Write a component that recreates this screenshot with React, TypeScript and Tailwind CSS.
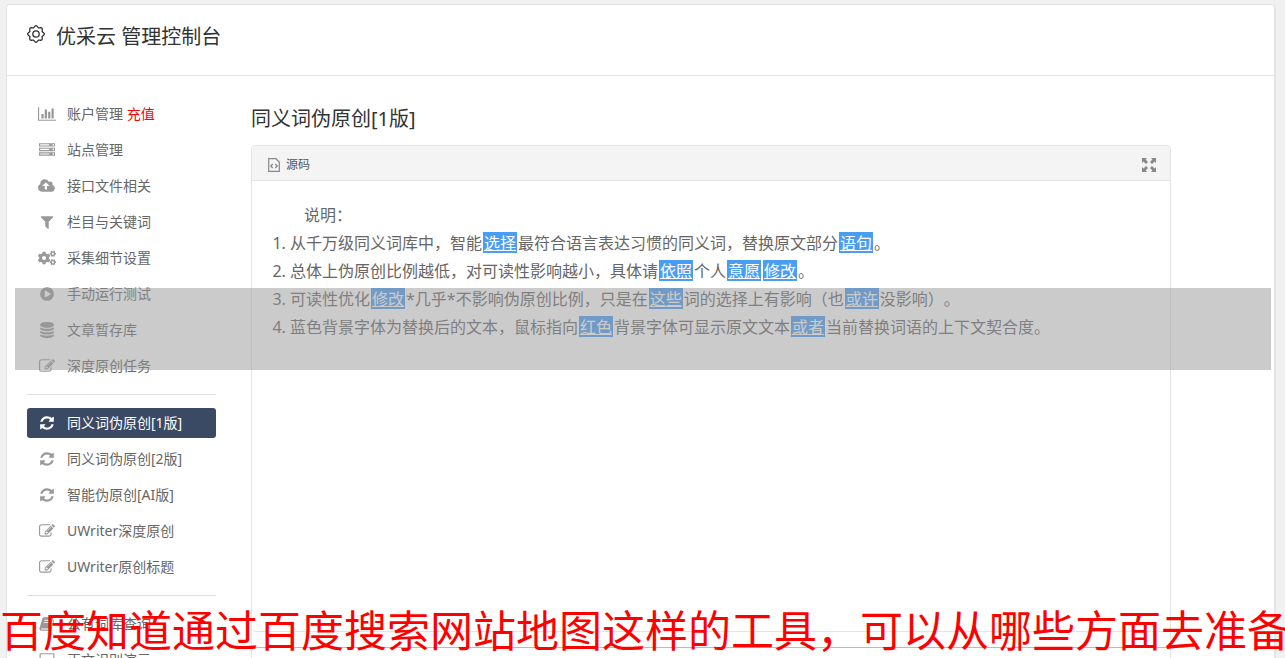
import React from 'react';
import { FaCogs } from 'react-icons/fa';

interface GlyphProps {
  d: string;
  wide?: boolean;
}

// all glyphs share a 1792 unit em, some are 2048 wide
const Glyph: React.FC<GlyphProps> = ({ d, wide = false }) => (
  <svg
    viewBox={wide ? '0 0 2048 1792' : '0 0 1792 1792'}
    className={wide ? 'w-[18px] h-4' : 'w-4 h-4'}
    fill="currentColor"
    aria-hidden="true"
  >
    <path d={d} />
  </svg>
);

const CHART =
  'M640 896v512h-256v-512h256zM1024 384v1024h-256v-1024h256zM2048 1536v128h-2048v-1536h128v1408h1920zM1408 640v768h-256v-768h256zM1792 256v1152h-256v-1152h256z';
const SERVER =
  'M128 1408h1024v-128h-1024v128zm0-512h1024v-128h-1024v128zm1568 448q0-40-28-68t-68-28-68 28-28 68 28 68 68 28 68-28 28-68zm-1568-960h1024v-128h-1024v128zm1568 448q0-40-28-68t-68-28-68 28-28 68 28 68 68 28 68-28 28-68zm0-512q0-40-28-68t-68-28-68 28-28 68 28 68 68 28 68-28 28-68zm96 832v384h-1792v-384h1792zm0-512v384h-1792v-384h1792zm0-512v384h-1792v-384h1792z';
const CLOUD =
  'M1280 864q0-14-9-23l-352-352q-9-9-23-9t-23 9l-351 351q-10 12-10 24 0 14 9 23t23 9h224v352q0 13 9.5 22.5t22.5 9.5h192q13 0 22.5-9.5t9.5-22.5v-352h224q13 0 22.5-9.5t9.5-22.5zm640 288q0 159-112.5 271.5t-271.5 112.5h-1088q-185 0-316.5-131.5t-131.5-316.5q0-130 70-240t188-165q-2-30-2-43 0-212 150-362t362-150q156 0 285.5 87t188.5 231q71-62 166-62 106 0 181 75t75 181q0 76-41 138 130 31 213.5 135.5t83.5 238.5z';
const FILTER =
  'M1595 295q17 41-14 70l-493 493v742q0 42-39 59-13 5-25 5-27 0-45-19l-256-256q-19-19-19-45v-486l-493-493q-31-29-14-70 17-39 59-39h1280q42 0 59 39z';
const PLAY =
  'M896 128q209 0 385.5 103t279.5 279.5 103 385.5-103 385.5-279.5 279.5-385.5 103-385.5-103-279.5-279.5-103-385.5 103-385.5 279.5-279.5 385.5-103zm384 823q32-18 32-55t-32-55l-544-320q-31-19-64-1-32 19-32 56v640q0 37 32 56 16 8 32 8 17 0 32-9z';
const DATABASE =
  'M896 768q237 0 443-43t325-127v170q0 69-103 128t-280 93.5-385 34.5-385-34.5-280-93.5-103-128v-170q119 84 325 127t443 43zm0 768q237 0 443-43t325-127v170q0 69-103 128t-280 93.5-385 34.5-385-34.5-280-93.5-103-128v-170q119 84 325 127t443 43zm0-384q237 0 443-43t325-127v170q0 69-103 128t-280 93.5-385 34.5-385-34.5-280-93.5-103-128v-170q119 84 325 127t443 43zm0-1152q208 0 385 34.5t280 93.5 103 128v128q0 69-103 128t-280 93.5-385 34.5-385-34.5-280-93.5-103-128v-128q0-69 103-128t280-93.5 385-34.5z';
const EDIT =
  'M888 1184l116-116-152-152-116 116v56h96v96h56zm440-720q-16-16-33 1l-350 350q-17 17-1 33t33-1l350-350q17-17 1-33zm80 594v190q0 119-84.5 203.5t-203.5 84.5h-832q-119 0-203.5-84.5t-84.5-203.5v-832q0-119 84.5-203.5t203.5-84.5h832q63 0 117 25 15 7 18 23 3 17-9 29l-49 49q-14 14-32 8-23-6-45-6h-832q-66 0-113 47t-47 113v832q0 66 47 113t113 47h832q66 0 113-47t47-113v-126q0-13 9-22l64-64q15-15 35-7t20 29zm-96-738l288 288-672 672h-288v-288zm444 132l-92 92-288-288 92-92q28-28 68-28t68 28l152 152q28 28 28 68t-28 68z';
const REFRESH =
  'M1639 1056q0 5-1 7-64 268-268 434.5t-478 166.5q-146 0-282.5-55t-243.5-157l-129 129q-19 19-45 19t-45-19-19-45v-448q0-26 19-45t45-19h448q26 0 45 19t19 45-19 45l-137 137q71 66 161 102t187 36q134 0 250-65t186-179q11-17 53-117 8-23 30-23h192q13 0 22.5 9.5t9.5 22.5zm25-800v448q0 26-19 45t-45 19h-448q-26 0-45-19t-19-45 19-45l138-138q-148-137-349-137-134 0-250 65t-186 179q-11 17-53 117-8 23-30 23h-199q-13 0-22.5-9.5t-9.5-22.5v-7q65-268 270-434.5t480-166.5q146 0 284 55.5t245 156.5l130-129q19-19 45-19t45 19 19 45z';
const BOOK =
  'M560 128h960q110 0 80 110l-310 1060q-30 90-120 90h-870q-70 0-90 50 0 80 110 80h920q50 0 70-50l330-1100q70 50 40 150l-310 1020q-40 120-160 120h-930q-170 0-220-150-30-90 0-170l330-1080q50-130 170-130zm70 300l-30 100h700l30-100zm-80 260l-30 100h700l30-100z';
const SCREEN =
  'M192 128h1408q130 0 130 130v1000q0 130-130 130h-500v150h150v100h-700v-100h150v-150h-508q-130 0-130-130v-1000q0-130 130-130zm30 128q-32 0-32 32v850q0 32 32 32h1350q32 0 32-32v-850q0-32-32-32z';

interface MenuItem {
  label: string;
  icon: React.ReactNode;
  tag?: string;
  active?: boolean;
}

const groups: MenuItem[][] = [
  [
    { label: '账户管理', icon: <Glyph d={CHART} wide />, tag: '充值' },
    { label: '站点管理', icon: <Glyph d={SERVER} /> },
    { label: '接口文件相关', icon: <Glyph d={CLOUD} wide /> },
    { label: '栏目与关键词', icon: <Glyph d={FILTER} /> },
    { label: '采集细节设置', icon: <FaCogs className="w-[18px] h-4" aria-hidden="true" /> },
    { label: '手动运行测试', icon: <Glyph d={PLAY} /> },
    { label: '文章暂存库', icon: <Glyph d={DATABASE} /> },
    { label: '深度原创任务', icon: <Glyph d={EDIT} /> },
  ],
  [
    { label: '同义词伪原创[1版]', icon: <Glyph d={REFRESH} />, active: true },
    { label: '同义词伪原创[2版]', icon: <Glyph d={REFRESH} /> },
    { label: '智能伪原创[AI版]', icon: <Glyph d={REFRESH} /> },
    { label: 'UWriter深度原创', icon: <Glyph d={EDIT} /> },
    { label: 'UWriter原创标题', icon: <Glyph d={EDIT} /> },
  ],
  [
    { label: '公有词库查询', icon: <Glyph d={BOOK} /> },
    { label: '正文识别演示', icon: <Glyph d={SCREEN} /> },
  ],
];

// scalloped outline of the header gear
const gearPoints = Array.from({ length: 96 }, (_, i) => {
  const a = (i / 96) * Math.PI * 2;
  const r = 7.5 + 0.8 * Math.cos(a * 8);
  return `${(9 + r * Math.cos(a)).toFixed(2)},${(9 + r * Math.sin(a)).toFixed(2)}`;
}).join(' ');

const GearIcon = () => (
  <svg viewBox="0 0 18 18" className="w-[18px] h-[18px]" fill="none" stroke="currentColor" strokeWidth="1.3" aria-hidden="true">
    <polygon points={gearPoints} />
    <circle cx="9" cy="9" r="3.2" />
  </svg>
);

const SourceIcon = () => (
  <svg viewBox="0 0 12 14" className="w-3 h-3.5" fill="none" stroke="#888" aria-hidden="true">
    <path d="M1 .7h6.8L11.3 4v9.3H.7V.7z" strokeWidth="1.2" />
    <path d="M4.7 6L2.8 8l1.9 2M7.3 6l1.9 2-1.9 2" strokeWidth="1.3" />
  </svg>
);

const ExpandIcon = () => (
  <svg viewBox="0 0 14 14" className="w-3.5 h-3.5" fill="#888" aria-hidden="true">
    <path d="M0 0h5L3.6 1.5 6 4 4 6 1.5 3.6 0 5zM14 0v5l-1.5-1.4L10 6 8 4l2.4-2.5L9 0zM0 14V9l1.5 1.4L4 8l2 2-2.4 2.5L5 14zM14 14H9l1.4-1.5L8 10l2-2 2.5 2.4L14 9z" />
  </svg>
);

const Mark: React.FC<{ children: React.ReactNode }> = ({ children }) => (
  <a href="#" className="inline-block h-[21px] mx-px px-px leading-[23px] bg-[#4a9df5] text-white underline">
    {children}
  </a>
);

const Sidebar = () => (
  <nav className="w-[189px] shrink-0 pt-[23px]">
    {groups.map((items, index) => (
      <ul
        key={index}
        className={index > 0 ? 'mt-[13px] pt-[13px] border-t border-[#ddd] space-y-1.5' : 'space-y-1.5'}
      >
        {items.map((item) => (
          <li key={item.label}>
            <a
              href="#"
              className={
                item.active
                  ? 'flex items-center h-[30px] pl-2.5 rounded-[3px] bg-[#3a4a65] text-white text-sm'
                  : 'flex items-center h-[30px] pl-2.5 rounded-[3px] text-[#666] text-sm'
              }
            >
              <span className={item.active ? 'flex justify-center w-5 mr-2.5 text-white' : 'flex justify-center w-5 mr-2.5 text-[#999]'}>
                {item.icon}
              </span>
              <span className="whitespace-nowrap">
                {item.label}
                {item.tag && <span className="text-[#f00]"> {item.tag}</span>}
              </span>
            </a>
          </li>
        ))}
      </ul>
    ))}
  </nav>
);

const Editor = () => (
  <main className="flex-1 min-w-0 max-w-[920px] pt-[27px]">
    <h2 className="text-xl leading-8 text-[#333]">同义词伪原创[1版]</h2>
    <section className="mt-[10px] border border-[#e4e4e4] rounded-t-[4px]">
      <div className="flex items-center justify-between h-[35px] pl-4 pr-3.5 pt-[3px] bg-[#f4f4f4] border-b border-[#e4e4e4] rounded-t-[4px]">
        <button type="button" className="flex items-center gap-1.5 text-xs text-[#555]">
          <SourceIcon />
          源码
        </button>
        <button type="button" aria-label="全屏">
          <ExpandIcon />
        </button>
      </div>
      <div className="min-h-[451px] px-5 py-5 text-base leading-7 text-[#666] border-b border-[#e4e4e4] rounded-b-[4px]">
        <p className="indent-8">说明：</p>
        <ol className="list-decimal pl-[18px]">
          <li>从千万级同义词库中，智能<Mark>选择</Mark>最符合语言表达习惯的同义词，替换原文部分<Mark>语句</Mark>。</li>
          <li>总体上伪原创比例越低，对可读性影响越小，具体请<Mark>依照</Mark>个人<Mark>意愿</Mark><Mark>修改</Mark>。</li>
          <li>可读性优化<Mark>修改</Mark>*几乎*不影响伪原创比例，只是在<Mark>这些</Mark>词的选择上有影响（也<Mark>或许</Mark>没影响）。</li>
          <li>蓝色背景字体为替换后的文本，鼠标指向<Mark>红色</Mark>背景字体可显示原文文本<Mark>或者</Mark>当前替换词语的上下文契合度。</li>
        </ol>
      </div>
      <div className="mt-[15px] h-12 border-t border-[#bbb]" />
    </section>
  </main>
);

export default function App() {
  return (
    <div className="relative h-screen overflow-hidden bg-[#f1f1f1] pt-1 pl-1.5 pr-[9px] font-['Noto_Sans','Noto_Sans_CJK_SC',sans-serif] [text-spacing-trim:space-all]">
      <div className="bg-white border border-r-2 border-[#e4e4e4] rounded-t-[4px]">
        <header className="flex items-start gap-[11px] h-[71px] pl-5 pt-4 border-b border-[#e4e4e4] text-[#333]">
          <span className="pt-1">
            <GearIcon />
          </span>
          <h1 className="text-xl leading-8">优采云 管理控制台</h1>
        </header>
        <div className="flex gap-[35px] pl-5 pr-5">
          <Sidebar />
          <Editor />
        </div>
      </div>

      <div className="absolute top-72 left-[15px] right-3.5 h-[82px] bg-[#979797]/50" />
      <p className="absolute bottom-0 left-0 whitespace-nowrap text-[43px] leading-[54px] text-[#f00]">
        百度知道通过百度搜索网站地图这样的工具，可以从哪些方面去准备
      </p>
    </div>
  );
}
